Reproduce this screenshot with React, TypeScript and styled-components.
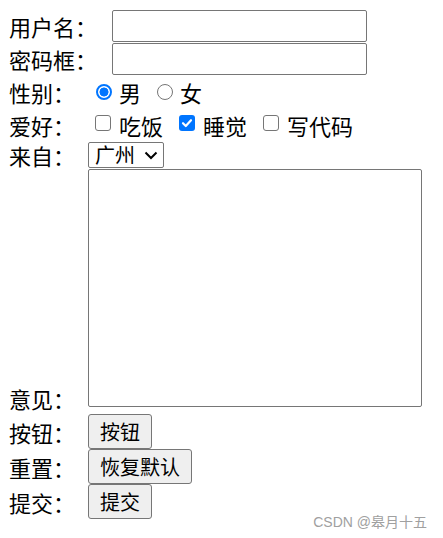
import styled, { createGlobalStyle } from 'styled-components'

const GlobalStyle = createGlobalStyle`
  body {
    margin: 0;
    background: #ffffff;
    font-family: "Noto Sans CJK SC", "Noto Sans", sans-serif;
    color: #000000;
  }
`

function CheckBox({ checked }: { checked?: boolean }) {
  return (
    <Box $checked={checked}>
      {checked && (
        <svg width='12' height='12' viewBox='0 0 12 12'>
          <path d='M2 6.2 L4.8 9 L10 3.2' fill='none' stroke='#ffffff' strokeWidth='2.2' strokeLinecap='round' strokeLinejoin='round' />
        </svg>
      )}
    </Box>
  )
}

function App() {
  return (
    <Page>
      <GlobalStyle />
      <Form>
        <Row $height={33}>
          <Label $width={103}>用户名：</Label>
          <TextInput type='text' />
        </Row>
        <Row $height={33}>
          <Label $width={103}>密码框：</Label>
          <TextInput type='password' />
        </Row>
        <Row $height={33}>
          <Label $width={79}>性别：</Label>
          <Radio $checked />
          <Option>男</Option>
          <Radio />
          <Option>女</Option>
        </Row>
        <Row $height={33}>
          <Label $width={79}>爱好：</Label>
          <CheckBox />
          <Option>吃饭</Option>
          <CheckBox checked />
          <Option>睡觉</Option>
          <CheckBox />
          <Option>写代码</Option>
        </Row>
        <Row $height={27}>
          <Label $width={79}>来自：</Label>
          <SelectWrap>
            <Select defaultValue='gz'>
              <option value='bj'>北京</option>
              <option value='sh'>上海</option>
              <option value='gz'>广州</option>
            </Select>
            <Chevron width='14' height='9' viewBox='0 0 14 9'>
              <path d='M1.5 1.5 L7 7 L12.5 1.5' fill='none' stroke='#000000' strokeWidth='2' />
            </Chevron>
          </SelectWrap>
        </Row>
        <Row $height={239} $align='flex-end'>
          <Label $width={79} $drop={4}>意见：</Label>
          <TextArea />
        </Row>
        <Row $height={35} $gap={7}>
          <Label $width={79}>按钮：</Label>
          <Button type='button'>按钮</Button>
        </Row>
        <Row $height={35}>
          <Label $width={79}>重置：</Label>
          <Button type='reset'>恢复默认</Button>
        </Row>
        <Row $height={35}>
          <Label $width={79}>提交：</Label>
          <Button type='submit'>提交</Button>
        </Row>
      </Form>
      <Watermark>CSDN @皋月十五</Watermark>
    </Page>
  )
}

const Page = styled.div`
  position: relative;
  width: 443px;
  height: 538px;
  overflow: hidden;
`

const Form = styled.form`
  display: flex;
  flex-direction: column;
  padding: 9px 0 0 9px;
`

const Row = styled.div<{ $height: number; $align?: string; $gap?: number }>`
  display: flex;
  align-items: ${p => p.$align || 'center'};
  height: ${p => p.$height}px;
  margin-top: ${p => p.$gap || 0}px;
`

const Label = styled.span<{ $width: number; $drop?: number }>`
  width: ${p => p.$width}px;
  flex-shrink: 0;
  font-size: 22px;
  line-height: 26px;
  white-space: nowrap;
  margin-bottom: ${p => -(p.$drop || 0)}px;
`

const TextInput = styled.input`
  box-sizing: border-box;
  width: 255px;
  height: 32px;
  border: 1px solid #767676;
  border-radius: 2px;
  padding: 0 4px;
  font-size: 20px;
  background: #ffffff;
`

const Radio = styled.span<{ $checked?: boolean }>`
  box-sizing: border-box;
  flex-shrink: 0;
  width: 16px;
  height: 16px;
  margin: 1px 7px 0 8px;
  border-radius: 50%;
  border: ${p => (p.$checked ? '2px solid #0075ff' : '1px solid #767676')};
  background: ${p => (p.$checked ? 'radial-gradient(circle, #0075ff 0 4.2px, #ffffff 4.8px)' : '#ffffff')};
  & + span + & {
    margin-left: 16px;
  }
`

const Box = styled.span<{ $checked?: boolean }>`
  box-sizing: border-box;
  flex-shrink: 0;
  display: flex;
  align-items: center;
  justify-content: center;
  width: 16px;
  height: 16px;
  margin: 0 8px 3px 7px;
  border-radius: 3px;
  border: ${p => (p.$checked ? 'none' : '1px solid #767676')};
  background: ${p => (p.$checked ? '#0075ff' : '#ffffff')};
  & + span + & {
    margin-left: 16px;
  }
`

const Option = styled.span`
  font-size: 22px;
  line-height: 26px;
  white-space: nowrap;
`

const SelectWrap = styled.div`
  position: relative;
  margin-top: 1px;
`

const Select = styled.select`
  display: block;
  box-sizing: border-box;
  width: 76px;
  height: 26px;
  margin: 0;
  padding: 0 0 0 6px;
  border: 1px solid #767676;
  border-radius: 2px;
  background: #ffffff;
  color: #000000;
  appearance: none;
  font-family: "Noto Sans CJK SC", sans-serif;
  font-size: 20px;
  line-height: 22px;
`

const Chevron = styled.svg`
  position: absolute;
  left: 56px;
  top: 9px;
  pointer-events: none;
`

const TextArea = styled.textarea`
  box-sizing: border-box;
  width: 334px;
  height: 238px;
  margin: 0;
  border: 1px solid #767676;
  border-radius: 2px;
  resize: none;
`

const Button = styled.button`
  box-sizing: border-box;
  height: 35px;
  padding: 0 11px;
  border: 1px solid #767676;
  border-radius: 3px;
  background: #efefef;
  color: #000000;
  font-family: "Noto Sans CJK SC", sans-serif;
  font-size: 20px;
  line-height: 22px;
  white-space: nowrap;
`

const Watermark = styled.div`
  position: absolute;
  right: 16px;
  bottom: 7px;
  font-family: "Liberation Sans", "Noto Sans CJK SC", sans-serif;
  font-size: 14px;
  color: #a0a0a0;
  white-space: nowrap;
`

export default App
